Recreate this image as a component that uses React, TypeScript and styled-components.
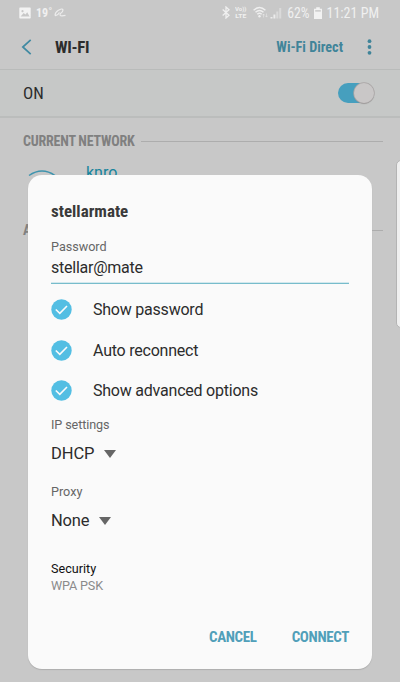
import React from 'react';
import styled, { createGlobalStyle } from 'styled-components';

const GlobalStyle = createGlobalStyle`
  * { box-sizing: border-box; }
  body { margin: 0; background: #c8c8c8; font-family: Roboto, "Noto Sans", sans-serif; }
`;

const Screen = styled.div`
  position: relative;
  width: 400px;
  height: 682px;
  overflow: hidden;
  background: #c8c8c8;
`;

interface TextProps {
  $size: number;
  $color?: string;
  $bold?: boolean;
  $narrow?: boolean;
  $spacing?: number;
}

const Text = styled.span<TextProps>`
  font-family: ${p => (p.$narrow ? '"Roboto Condensed", Roboto, sans-serif' : 'Roboto, sans-serif')};
  font-stretch: ${p => (p.$narrow ? '75%' : '100%')};
  font-size: ${p => p.$size}px;
  font-weight: ${p => (p.$bold ? 700 : 400)};
  color: ${p => p.$color ?? '#2c2c2c'};
  letter-spacing: ${p => p.$spacing ?? 0}px;
  white-space: nowrap;
`;

const StatusBar = styled.div`
  display: flex;
  align-items: center;
  height: 25px;
  padding: 0 21px 0 19px;
`;

const StatusGroup = styled.div<{ $end?: boolean }>`
  display: flex;
  align-items: center;
  margin-left: ${p => (p.$end ? 'auto' : '0')};
  svg { display: block; }
`;

const Gap = styled.span<{ $w: number }>`
  width: ${p => p.$w}px;
`;

const TitleBar = styled.header`
  display: flex;
  align-items: center;
  height: 45px;
  padding: 0 28px 0 21px;
  border-bottom: 1px solid #b9bbba;
  svg { display: block; }
`;

const Title = styled.div`
  flex: 1;
  display: flex;
  padding-left: 23px;
`;

const SwitchBar = styled.div`
  display: flex;
  align-items: center;
  justify-content: space-between;
  height: 48px;
  padding: 0 26px 0 23px;
  background: #c6c8c7;
  border-bottom: 2px solid #bbbdbc;
`;

const Track = styled.div`
  display: flex;
  justify-content: flex-end;
  align-items: center;
  width: 36px;
  height: 20px;
  border-radius: 10px;
  background: #469fbe;
`;

const Knob = styled.div`
  width: 20px;
  height: 20px;
  border-radius: 50%;
  background: #c9c7c7;
  box-shadow: 0 0 0 0.7px #a9a5a5, 0 1px 1px #8a8a8a;
`;

const SectionHeader = styled.div`
  display: flex;
  align-items: center;
  gap: 6px;
  height: 46px;
  padding: 0 17px 0 23px;
`;

const Rule = styled.div`
  flex: 1;
  height: 1px;
  background: #adadad;
`;

const NetworkRow = styled.div`
  display: flex;
  align-items: flex-start;
  height: 43px;
  padding: 0 27px;
  gap: 28px;
  line-height: 18px;
  svg { display: block; margin-top: 5px; }
`;

const EdgeHandle = styled.div`
  position: absolute;
  left: 396px;
  top: 160px;
  width: 12px;
  height: 168px;
  border-radius: 5px;
  background: #f0f0f0;
  border: 1px solid #b4b4b4;
`;

const Dialog = styled.section`
  position: absolute;
  left: 28px;
  top: 175px;
  width: 344px;
  height: 494px;
  padding: 23px 23px 0;
  border-radius: 14px;
  background: #fafafa;
  box-shadow: 0 1px 1px #adadad;
  display: flex;
  flex-direction: column;
`;

const Line = styled.div<{ $h: number; $mt?: number }>`
  display: flex;
  align-items: center;
  height: ${p => p.$h}px;
  margin-top: ${p => p.$mt ?? 0}px;
  flex: none;
`;

const Field = styled(Line)`
  padding-bottom: 3px;
  border-bottom: 1px solid #77bccb;
  box-shadow: 0 -1px 0 #d3e8ed inset;
`;

const CheckRow = styled.label`
  display: flex;
  align-items: center;
  gap: 21px;
  height: 40.7px;
  flex: none;
  svg { display: block; }
`;

const Arrow = styled.i`
  margin: 1px 0 0 9.5px;
  border: 6.5px solid transparent;
  border-top: 8px solid #666;
  border-bottom: 0;
`;

const Actions = styled.div`
  display: flex;
  justify-content: flex-end;
  align-items: center;
  gap: 35px;
  height: 24px;
  margin-top: 31px;
`;

const CheckMark = () => (
  <svg width="21" height="21" viewBox="0 0 21 21">
    <circle cx="10.5" cy="10.5" r="10.2" fill="#53bee3" />
    <path d="M4.8 10.5 8.8 14.3 16 7" fill="none" stroke="#fafafa" strokeWidth="1.6" />
  </svg>
);

const options = ['Show password', 'Auto reconnect', 'Show advanced options'];

export default function App() {
  return (
    <Screen>
      <GlobalStyle />
      <StatusBar>
        <StatusGroup>
          <svg width="12" height="12" viewBox="0 0 12 12">
            <path fillRule="evenodd" fill="#f3f3f3" d="M1 .5h10q.7 0 .7.7v9.6q0 .7-.7.7H1q-.7 0-.7-.7V1.2Q.3.5 1 .5ZM1.6 9.5h9L8.2 5.3 6.5 7.6 4.7 6.1ZM3.5 3a1.1 1.1 0 1 0 .01 0Z" />
          </svg>
          <Gap $w={5} />
          <Text $narrow $bold $size={12} $color="#f0f0f0">19˚</Text>
          <Gap $w={1.5} />
          <svg width="12" height="10" viewBox="0 0 12 10" fill="none" stroke="#ececec" strokeWidth="1.2">
            <path d="M1 7.5Q1 4.5 4 2.5Q8.5-.2 9 2Q9 4 6.5 5.5Q5 7.8 8 7.8L11.5 7.4M1 7.5Q3.5 8 5.5 4.5" />
          </svg>
        </StatusGroup>
        <StatusGroup $end>
          <svg width="8" height="13" viewBox="0 0 8 13" fill="none" stroke="#f0f0f0" strokeWidth="1.3">
            <path d="M.7 3.5 7 9.3 4 12V1L7 3.7.7 9.5" />
          </svg>
          <Gap $w={5} />
          <svg width="12" height="15" viewBox="0 0 12 15" fill="#f0f0f0" fontFamily="Roboto" fontWeight="700">
            <text x="0" y="5.8" fontSize="6" textLength="11.5" lengthAdjust="spacingAndGlyphs">Vo))</text>
            <text x="0.3" y="13" fontSize="6" textLength="11" lengthAdjust="spacingAndGlyphs">LTE</text>
          </svg>
          <Gap $w={5.5} />
          <svg width="16" height="13" viewBox="0 0 16 13" fill="none" stroke="#efefef" strokeWidth="1.4">
            <path d="M.6 4.3Q6.5-1.2 12.4 4.3M2.5 6.3Q6.5 2.7 10.5 6.3M4.3 8.3Q6.5 6.3 8.7 8.3" />
            <circle cx="6.5" cy="10.3" r="1.2" fill="#efefef" stroke="none" />
            <path d="M10.5 11.5V8M9.3 9.3l1.2-1.3 1.2 1.3M13.5 7.5V11M12.3 9.8l1.2 1.3 1.2-1.3" strokeWidth=".8" opacity=".6" />
          </svg>
          <Gap $w={1.5} />
          <svg width="12" height="12" viewBox="0 0 12 12">
            <path d="M.5 11.5V10h2v1.5ZM3.4 11.5V7.5h2v4Z" fill="#ececec" />
            <path d="M6.3 11.5V4.5h2v7ZM9.2 11.5V1h2v10.5Z" fill="#dadada" />
          </svg>
          <Gap $w={5} />
          <Text $narrow $size={13.8} $color="#f0f0f0">62%</Text>
          <Gap $w={4.5} />
          <svg width="8" height="12" viewBox="0 0 8 12">
            <path fill="#f2f2f2" d="M2.2.3h3.6v1.4H8V12H0V1.7h2.2Z" />
            <path d="M1.2 3h5.6v1.7H1.2Z" fill="#cfcfcf" />
          </svg>
          <Gap $w={4.5} />
          <Text $narrow $size={14} $color="#f0f0f0">11:21 PM</Text>
        </StatusGroup>
      </StatusBar>
      <TitleBar>
        <svg width="11" height="16" viewBox="0 0 11 16" fill="none" stroke="#408aa2" strokeWidth="1.7">
          <path d="M9.7.8 1.8 8 9.7 15.2" />
        </svg>
        <Title><Text $narrow $bold $size={16.8} $spacing={-0.3}>WI-FI</Text></Title>
        <Text $narrow $bold $size={14.2} $color="#408499">Wi-Fi Direct</Text>
        <Gap $w={24} />
        <svg width="5" height="16" viewBox="0 0 5 16" fill="#408499">
          <circle cx="2.5" cy="2.2" r="1.9" />
          <circle cx="2.5" cy="8" r="1.9" />
          <circle cx="2.5" cy="13.8" r="1.9" />
        </svg>
      </TitleBar>
      <SwitchBar>
        <Text $narrow $size={17}>ON</Text>
        <Track><Knob /></Track>
      </SwitchBar>
      <SectionHeader>
        <Text $narrow $bold $size={14} $spacing={-0.22} $color="#808080">CURRENT NETWORK</Text>
        <Rule />
      </SectionHeader>
      <NetworkRow>
        <svg width="31" height="20" viewBox="0 0 31 20" fill="none" stroke="#3f94ae" strokeWidth="1.5">
          <path d="M2 6.5Q15 -2.5 28 6.5" />
        </svg>
        <Text $size={16} $color="#16849c">knro</Text>
      </NetworkRow>
      <SectionHeader>
        <Text $narrow $bold $size={14} $spacing={-0.22} $color="#808080">AVAILABLE NETWORKS</Text>
        <Rule />
      </SectionHeader>
      <EdgeHandle />
      <Dialog>
        <Line $h={26}><Text $narrow $bold $size={17} $color="#3a3a3a">stellarmate</Text></Line>
        <Line $h={18} $mt={13}><Text $size={12.6} $color="#666">Password</Text></Line>
        <Field $h={29}><Text $size={16} $spacing={-0.24}>stellar@mate</Text></Field>
        <Line $h={5} />
        {options.map(label => (
          <CheckRow key={label}><CheckMark /><Text $size={16} $spacing={-0.22}>{label}</Text></CheckRow>
        ))}
        <Line $h={18} $mt={4}><Text $size={12.6} $spacing={-0.1} $color="#666">IP settings</Text></Line>
        <Line $h={24} $mt={8}><Text $size={16.5} $spacing={-0.1}>DHCP</Text><Arrow /></Line>
        <Line $h={18} $mt={17}><Text $size={12.6} $color="#666">Proxy</Text></Line>
        <Line $h={24} $mt={8}><Text $size={16.5} $spacing={-0.2}>None</Text><Arrow /></Line>
        <Line $h={18} $mt={27}><Text $size={12.6} $color="#111">Security</Text></Line>
        <Line $h={17}><Text $size={12.6} $spacing={-0.15} $color="#8b8b8b">WPA PSK</Text></Line>
        <Actions>
          <Text $narrow $bold $size={15} $spacing={-0.35} $color="#509fb9">CANCEL</Text>
          <Text $narrow $bold $size={15} $spacing={-0.35} $color="#509fb9">CONNECT</Text>
        </Actions>
      </Dialog>
    </Screen>
  );
}
